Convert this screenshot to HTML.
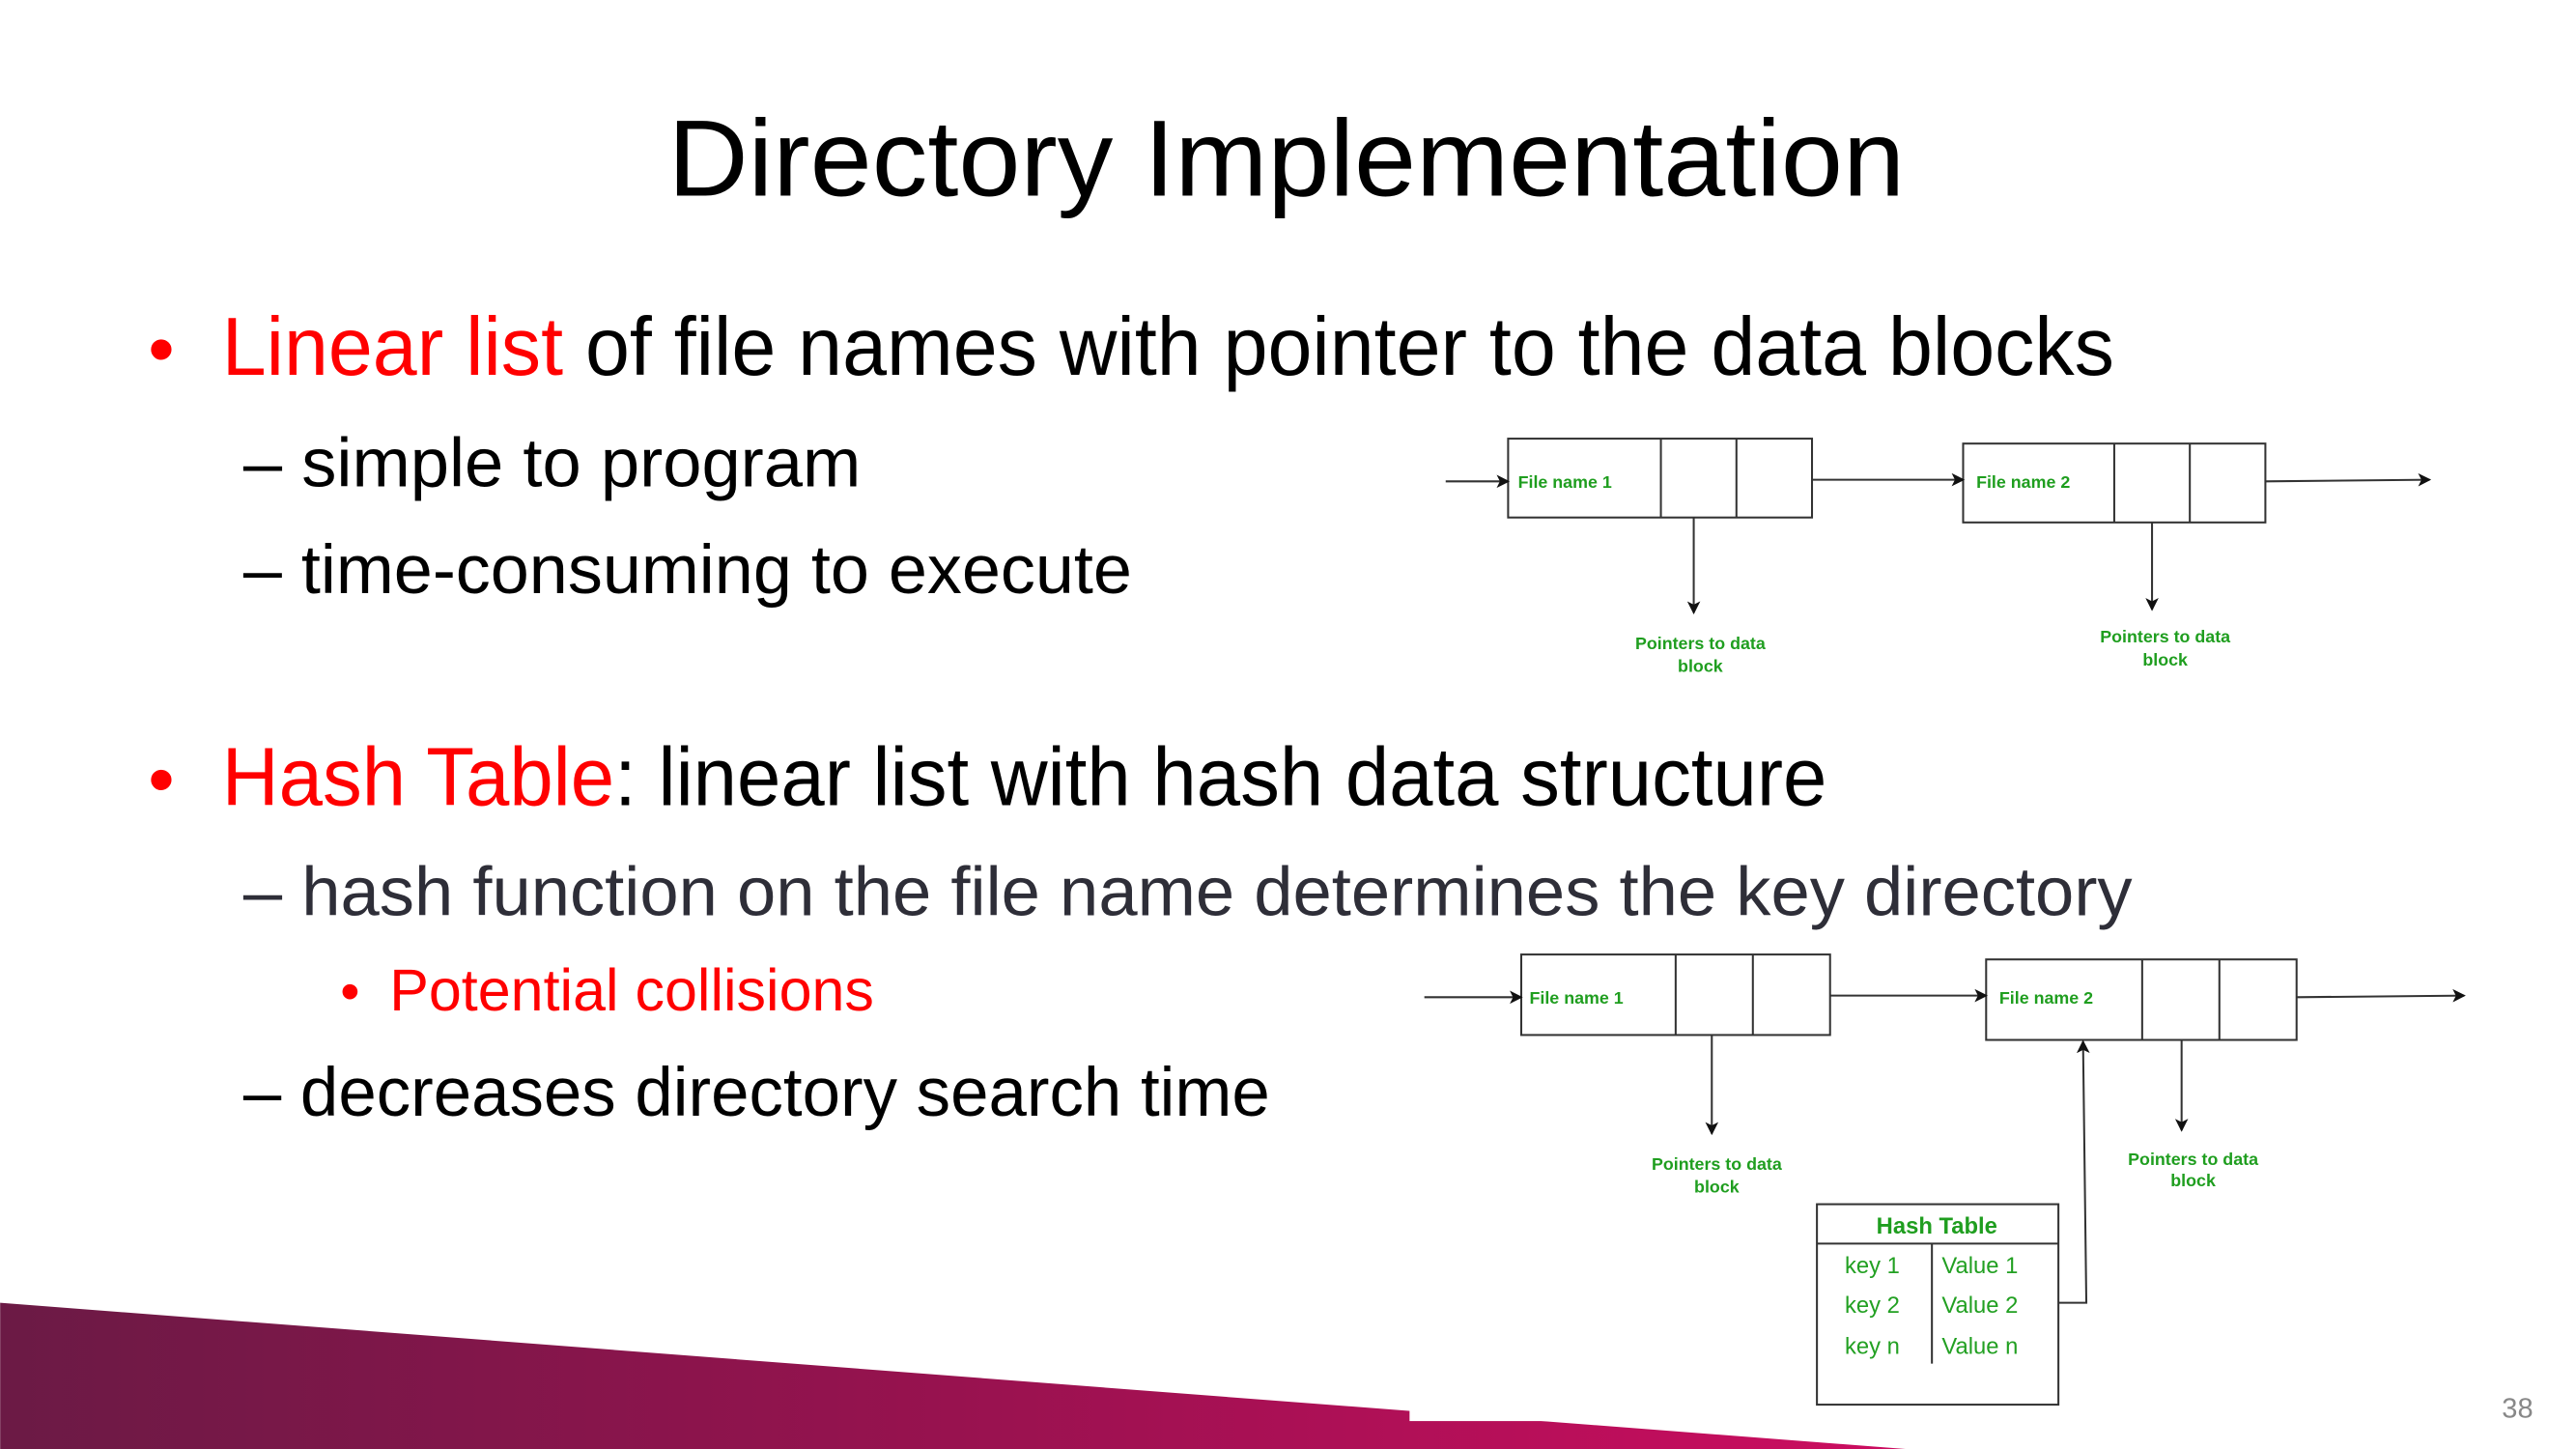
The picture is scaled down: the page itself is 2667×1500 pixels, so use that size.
<!DOCTYPE html>
<html><head><meta charset="utf-8"><style>
html,body{margin:0;padding:0;background:#fff;overflow:hidden}
svg{display:block}
text{font-family:"Liberation Sans",sans-serif}
.g{fill:#1f9e1f;font-weight:bold;font-size:10.5px}
.gt{fill:#22a022;font-size:14px}
</style></head><body>
<svg width="2667" height="1500" viewBox="0 0 1568 882" xmlns="http://www.w3.org/2000/svg">
<defs>
<linearGradient id="bg" x1="0" x2="1" y1="0" y2="0">
<stop offset="0" stop-color="#6b1a45"/><stop offset="0.5" stop-color="#98124f"/><stop offset="1" stop-color="#cc0d60"/>
</linearGradient>
<marker id="ar" markerWidth="8" markerHeight="8" refX="7" refY="4" orient="auto" markerUnits="userSpaceOnUse"><path d="M0,0 L8,4 L0,8 L2,4z" fill="#111"/></marker>
</defs>
<rect width="1568" height="882" fill="#fff"/>
<polygon points="0,793 1160,882 0,882" fill="url(#bg)"/>
<rect x="858" y="740" width="650" height="125" fill="#fff"/>
<text x="783" y="119" font-size="66" text-anchor="middle" textLength="753" lengthAdjust="spacingAndGlyphs" fill="#000">Directory Implementation</text>
<text x="90" y="228" font-size="46" fill="#f00">•</text>
<text x="135" y="228" font-size="50" textLength="1152" lengthAdjust="spacingAndGlyphs"><tspan fill="#f00">Linear list</tspan><tspan fill="#000"> of file names with pointer to the data blocks</tspan></text>
<text x="148" y="296" font-size="42" textLength="376" lengthAdjust="spacingAndGlyphs" fill="#000">– simple to program</text>
<text x="148" y="361" font-size="42" textLength="541" lengthAdjust="spacingAndGlyphs" fill="#000">– time-consuming to execute</text>
<text x="90" y="490" font-size="46" fill="#f00">•</text>
<text x="135" y="490" font-size="50" textLength="977" lengthAdjust="spacingAndGlyphs"><tspan fill="#f00">Hash Table</tspan><tspan fill="#000">: linear list with hash data structure</tspan></text>
<text x="148" y="557" font-size="42" textLength="1150" lengthAdjust="spacingAndGlyphs" fill="#2e2e38">– hash function on the file name determines the key directory</text>
<text x="207" y="615" font-size="34" fill="#f00">•</text>
<text x="237" y="615" font-size="36" textLength="295" lengthAdjust="spacingAndGlyphs" fill="#f00">Potential collisions</text>
<text x="148" y="679" font-size="42" textLength="625" lengthAdjust="spacingAndGlyphs" fill="#000">– decreases directory search time</text>
<text x="1523" y="863" font-size="17" textLength="19" lengthAdjust="spacingAndGlyphs" fill="#888">38</text>

<g stroke="#333" stroke-width="1.2" fill="none">
<rect x="918" y="267" width="185" height="48" fill="#fff"/><line x1="1011" y1="267" x2="1011" y2="315"/><line x1="1057" y1="267" x2="1057" y2="315"/>
<rect x="1195" y="270" width="184" height="48" fill="#fff"/><line x1="1287" y1="270" x2="1287" y2="318"/><line x1="1333" y1="270" x2="1333" y2="318"/>
<line x1="880" y1="293" x2="918" y2="293" marker-end="url(#ar)"/>
<line x1="1103" y1="292" x2="1195" y2="292" marker-end="url(#ar)"/>
<line x1="1379" y1="293" x2="1479" y2="292" marker-end="url(#ar)"/>
<line x1="1031" y1="315" x2="1031" y2="373" marker-end="url(#ar)"/>
<line x1="1310" y1="318" x2="1310" y2="371" marker-end="url(#ar)"/>

<rect x="926" y="581" width="188" height="49" fill="#fff"/><line x1="1020" y1="581" x2="1020" y2="630"/><line x1="1067" y1="581" x2="1067" y2="630"/>
<rect x="1209" y="584" width="189" height="49" fill="#fff"/><line x1="1304" y1="584" x2="1304" y2="633"/><line x1="1351" y1="584" x2="1351" y2="633"/>
<line x1="867" y1="607" x2="926" y2="607" marker-end="url(#ar)"/>
<line x1="1114" y1="606" x2="1209" y2="606" marker-end="url(#ar)"/>
<line x1="1398" y1="607" x2="1500" y2="606" marker-end="url(#ar)"/>
<line x1="1042" y1="630" x2="1042" y2="690" marker-end="url(#ar)"/>
<line x1="1328" y1="633" x2="1328" y2="688" marker-end="url(#ar)"/>
<rect x="1106" y="733" width="147" height="122" fill="#fff"/>
<line x1="1106" y1="757" x2="1253" y2="757"/>
<line x1="1176" y1="757" x2="1176" y2="830"/>
<polyline points="1253,793 1270,793 1268,634" marker-end="url(#ar)"/>
</g>
<text class="g" x="924" y="297">File name 1</text>
<text class="g" x="1203" y="297">File name 2</text>
<text class="g" x="1035" y="395" text-anchor="middle">Pointers to data</text>
<text class="g" x="1035" y="409" text-anchor="middle">block</text>
<text class="g" x="1318" y="391" text-anchor="middle">Pointers to data</text>
<text class="g" x="1318" y="405" text-anchor="middle">block</text>
<text class="g" x="931" y="611">File name 1</text>
<text class="g" x="1217" y="611">File name 2</text>
<text class="g" x="1045" y="712" text-anchor="middle">Pointers to data</text>
<text class="g" x="1045" y="726" text-anchor="middle">block</text>
<text class="g" x="1335" y="709" text-anchor="middle">Pointers to data</text>
<text class="g" x="1335" y="722" text-anchor="middle">block</text>
<text x="1179" y="751" text-anchor="middle" font-size="14" font-weight="bold" fill="#1f9e1f">Hash Table</text>
<text class="gt" x="1123" y="775">key 1</text><text class="gt" x="1182" y="775">Value 1</text>
<text class="gt" x="1123" y="799">key 2</text><text class="gt" x="1182" y="799">Value 2</text>
<text class="gt" x="1123" y="824">key n</text><text class="gt" x="1182" y="824">Value n</text>
</svg>
</body></html>
